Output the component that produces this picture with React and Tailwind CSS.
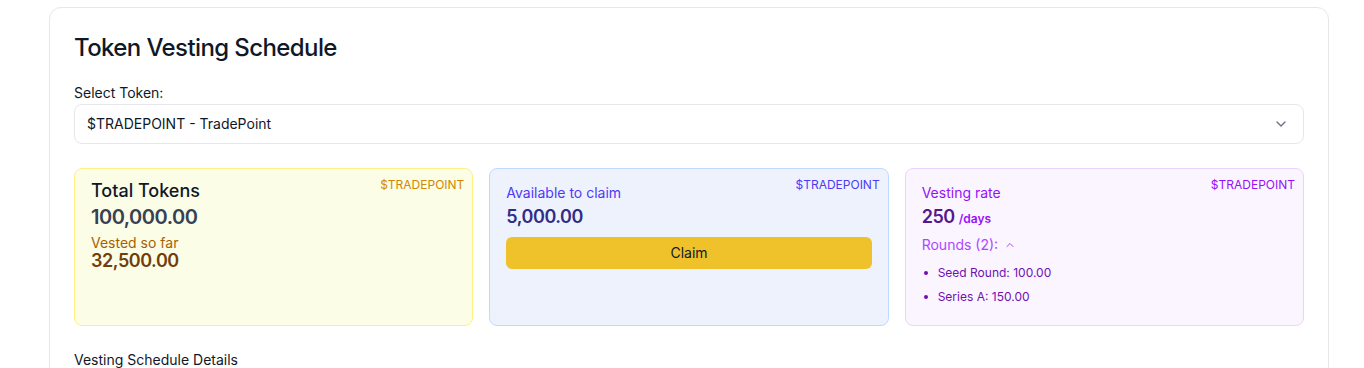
import { ChevronDown, ChevronUp } from "lucide-react";

const rounds = [
  { name: "Seed Round", amount: "100.00" },
  { name: "Series A", amount: "150.00" },
];

export default function App() {
  return (
    <div
      className="min-h-screen bg-white pt-[7px] pl-[49px]"
      style={{ fontFamily: "Inter, 'Noto Sans', sans-serif" }}
    >
      <div className="w-[1280px] rounded-xl border border-gray-200 bg-white p-6 pb-0">
        {/* Header */}
        <h1 className="text-2xl leading-8 font-medium text-gray-900 tracking-tight">
          Token Vesting Schedule
        </h1>

        {/* Token select */}
        <label className="mt-[19px] block text-sm leading-5 text-gray-900">
          Select Token:
        </label>
        <div className="mt-px flex h-10 w-[1230px] items-center justify-between rounded-lg border border-gray-200 bg-white px-3 text-sm text-gray-900">
          <span>$TRADEPOINT - TradePoint</span>
          <ChevronDown size={16} className="mr-0.5 text-gray-500" />
        </div>

        {/* Summary cards */}
        <div className="mt-6 grid w-[1230px] grid-cols-3 gap-4">
          <div className="relative min-h-[158px] rounded-lg border border-yellow-200 bg-[#fcfde7] px-4 pt-2.5">
            <span className="absolute top-2 right-2 text-xs text-yellow-600">
              $TRADEPOINT
            </span>
            <p className="text-lg leading-6 font-medium text-gray-900">
              Total Tokens
            </p>
            <p className="text-xl leading-7 font-semibold tracking-tight text-gray-700">
              100,000.00
            </p>
            <p className="mt-1 text-sm leading-4 text-yellow-700">
              Vested so far
            </p>
            <p className="text-lg leading-5 font-semibold tracking-tight text-yellow-900">
              32,500.00
            </p>
          </div>

          <div className="relative min-h-[158px] rounded-lg border border-blue-200 bg-[#eef2fd] px-4 pt-[14px]">
            <span className="absolute top-2 right-2 text-xs text-indigo-600">
              $TRADEPOINT
            </span>
            <p className="text-sm leading-5 text-indigo-600">
              Available to claim
            </p>
            <p className="text-lg leading-7 font-semibold tracking-tight text-indigo-900">
              5,000.00
            </p>
            <button className="mt-1.5 h-8 w-full rounded-md bg-[#efc12b] text-sm text-gray-900">
              Claim
            </button>
          </div>

          <div className="relative min-h-[158px] rounded-lg border border-purple-200 bg-purple-50 px-4 pt-[14px]">
            <span className="absolute top-2 right-2 text-xs text-purple-600">
              $TRADEPOINT
            </span>
            <p className="text-sm leading-5 text-purple-600">Vesting rate</p>
            <p className="text-lg leading-7 font-semibold tracking-tight text-purple-900">
              250 <span className="text-xs font-semibold tracking-normal text-purple-600">/days</span>
            </p>
            <div className="mt-1 flex items-center gap-1.5 text-sm leading-5 text-purple-500">
              <span>Rounds (2):</span>
              <ChevronUp size={12} />
            </div>
            <ul className="mt-2.5 space-y-2">
              {rounds.map((round) => (
                <li
                  key={round.name}
                  className="flex items-center gap-2.5 text-xs leading-4 text-purple-800"
                >
                  <span className="ml-0.5 h-1 w-1 rounded-full bg-purple-800" />
                  {round.name}: {round.amount}
                </li>
              ))}
            </ul>
          </div>
        </div>

        <h2 className="mt-6 text-sm leading-5 text-gray-900">
          Vesting Schedule Details
        </h2>
        <div className="h-10" />
      </div>
    </div>
  );
}
